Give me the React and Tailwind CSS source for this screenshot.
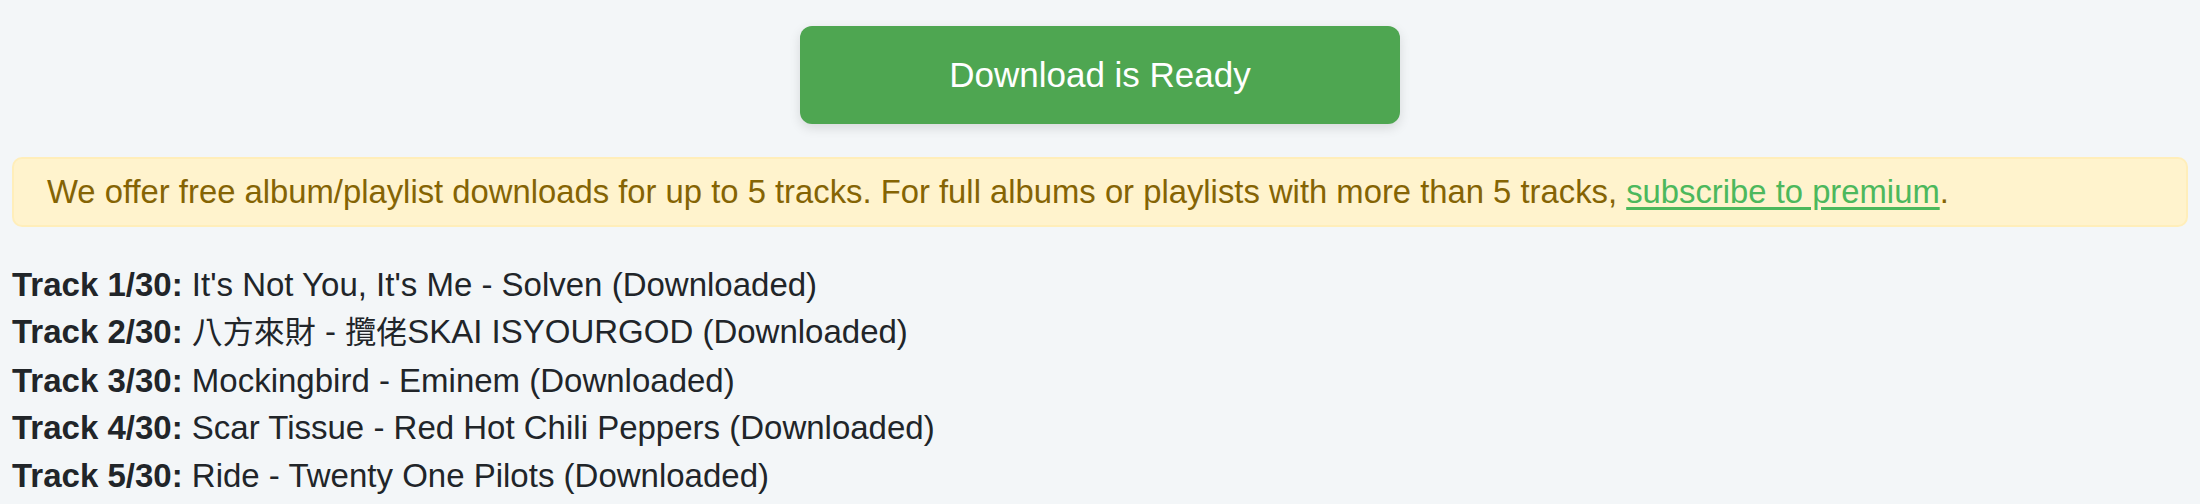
export default function App() {
    const tracks = [
        "It's Not You, It's Me - Solven",
        <><span className="text-[31px]">八方來財</span> - <span className="text-[31px]">攬佬</span>SKAI ISYOURGOD</>,
        "Mockingbird - Eminem",
        "Scar Tissue - Red Hot Chili Peppers",
        "Ride - Twenty One Pilots",
    ];

    return (
        <div
            className="min-h-[504px] bg-[#f3f6f8] px-[12px] pt-[26px] text-[#212529]"
            style={{fontFamily: '"Liberation Sans", "Noto Sans CJK TC", sans-serif'}}
        >
            <div className="flex justify-center">
                <button
                    className="w-[600px] h-[98px] rounded-[12px] bg-[#4ea651] text-white text-[35px] shadow-[0_4px_12px_rgba(0,0,0,0.12)]">
                    Download is Ready
                </button>
            </div>

            <div
                className="mt-[33px] h-[70px] flex items-center rounded-[10px] border-2 border-[#ffeeba] bg-[#fff3cd] px-[33px] text-[32.8px] text-[#856404]">
                <span>
                    We offer free album/playlist downloads for up to 5 tracks. For full albums or playlists with more
                    than 5 tracks,{" "}
                    <a href="#" className="text-[#4cb85c] underline underline-offset-4">subscribe to premium</a>.
                </span>
            </div>

            <div className="mt-[34px] text-[33px] leading-[47.4px]">
                {tracks.map((name, i) => (
                    <div key={i}>
                        <b>Track {i + 1}/30:</b> {name} (Downloaded)
                    </div>
                ))}
            </div>
        </div>
    );
}
